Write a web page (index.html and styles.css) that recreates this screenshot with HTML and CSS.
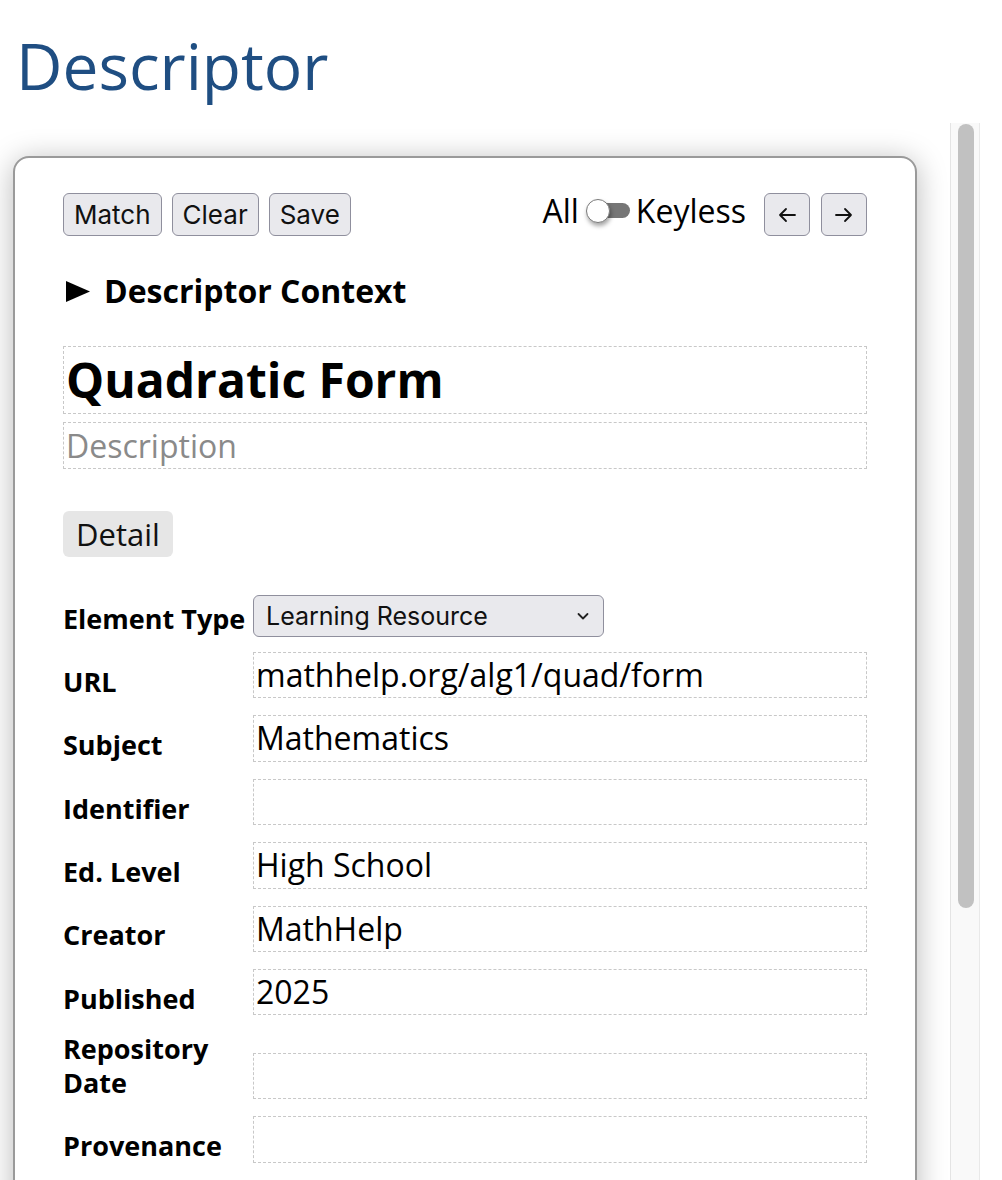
FILE: index.html
```html
<!DOCTYPE html>
<html lang="en">
<head>
<meta charset="utf-8">
<title>Descriptor</title>
<link rel="stylesheet" href="styles.css">
</head>
<body>
<h1 class="page-title">Descriptor</h1>
<div class="workspace">
  <div class="scroller">
    <section class="panel">
      <div class="toolbar">
        <div class="btn-group">
          <button class="btn">Match</button>
          <button class="btn">Clear</button>
          <button class="btn">Save</button>
        </div>
        <div class="toolbar-right">
          <div class="mode-toggle">
            <span class="mode-label">All</span>
            <span class="switch"><span class="track"></span><span class="knob"></span></span>
            <span class="mode-label keyless">Keyless</span>
          </div>
          <div class="nav">
            <button class="btn btn-icon" aria-label="Previous">
              <svg width="20" height="16" viewBox="0 0 20 16"><path d="M18 8H3M9 2L3 8l6 6" fill="none" stroke="#111" stroke-width="1.8" stroke-linecap="round" stroke-linejoin="round"/></svg>
            </button>
            <button class="btn btn-icon" aria-label="Next">
              <svg width="20" height="16" viewBox="0 0 20 16"><path d="M2 8h15M11 2l6 6-6 6" fill="none" stroke="#111" stroke-width="1.8" stroke-linecap="round" stroke-linejoin="round"/></svg>
            </button>
          </div>
        </div>
      </div>

      <details class="context">
        <summary>
          <svg class="marker" width="24" height="21" viewBox="0 0 24 21"><polygon points="0,0 24,10.5 0,21" fill="#000"/></svg>
          <span>Descriptor Context</span>
        </summary>
      </details>

      <div class="field title-field">Quadratic Form</div>
      <div class="field desc-field placeholder">Description</div>

      <button class="detail-btn">Detail</button>

      <div class="form">
        <div class="label">Element Type</div>
        <div class="select">
          <span>Learning Resource</span>
          <svg class="chev" width="14" height="10" viewBox="0 0 14 10"><path d="M2.5 3l4.5 4.5L11.5 3" fill="none" stroke="#222" stroke-width="1.8" stroke-linecap="round" stroke-linejoin="round"/></svg>
        </div>

        <div class="label">URL</div>
        <div class="field input">mathhelp.org/alg1/quad/form</div>

        <div class="label">Subject</div>
        <div class="field input">Mathematics</div>

        <div class="label">Identifier</div>
        <div class="field input"></div>

        <div class="label">Ed. Level</div>
        <div class="field input">High School</div>

        <div class="label">Creator</div>
        <div class="field input">MathHelp</div>

        <div class="label">Published</div>
        <div class="field input">2025</div>

        <div class="label">Repository Date</div>
        <div class="field input"></div>

        <div class="label">Provenance</div>
        <div class="field input"></div>
      </div>
    </section>
  </div>
  <div class="scrollbar"><div class="thumb"></div></div>
</div>
</body>
</html>
```

FILE: styles.css
```css
html, body {
  margin: 0;
  padding: 0;
  background: #fff;
  overflow: hidden;
}

body {
  font-family: "Open Sans", "Noto Sans", sans-serif;
  color: #000;
}

.page-title {
  margin: 0;
  padding: 21px 0 0 16px;
  height: 123px;
  box-sizing: border-box;
  font-size: 64px;
  font-weight: 400;
  line-height: 90px;
  color: #1f4e82;
}

.workspace {
  display: flex;
  height: 1057px;
  width: 980px;
}

.scroller {
  width: 950px;
  flex: none;
  overflow: hidden;
}

.scrollbar {
  width: 30px;
  flex: none;
  box-sizing: border-box;
  background: #f9f9f9;
  border-left: 1px solid #e4e4e4;
  border-right: 1px solid #e9e9e9;
  padding: 1px 5px 0 7px;
}

.thumb {
  height: 784px;
  border-radius: 8px;
  background: #c1c1c1;
}

.panel {
  margin: 33px 33px 0 13px;
  border: 2px solid #9a9a9a;
  border-radius: 16px;
  box-shadow: 0 4px 30px rgba(0, 0, 0, 0.28);
  padding: 35px 48px 300px 48px;
  background: #fff;
}

.toolbar {
  display: flex;
  justify-content: space-between;
  align-items: center;
  height: 43px;
}

.btn-group {
  display: flex;
  gap: 10px;
}

.btn {
  font-family: Inter, "Liberation Sans", sans-serif;
  font-size: 26px;
  height: 43px;
  padding: 0 10px;
  background: #e9e9ed;
  border: 1.5px solid #8f8f9d;
  border-radius: 6px;
  color: #111;
  display: flex;
  align-items: center;
  justify-content: center;
}

.toolbar-right {
  display: flex;
  align-items: center;
}

.mode-toggle {
  display: flex;
  align-items: center;
  margin-bottom: 8px;
}

.mode-label {
  font-size: 32px;
  line-height: 40px;
}

.switch {
  position: relative;
  width: 44px;
  height: 24px;
  margin: 0 6px 0 7px;
}

.track {
  position: absolute;
  left: 4px;
  right: 0;
  top: 4.5px;
  height: 15px;
  border-radius: 7.5px;
  background: #767676;
}

.knob {
  position: absolute;
  left: 0;
  top: 0;
  width: 24px;
  height: 24px;
  box-sizing: border-box;
  border-radius: 50%;
  background: #fff;
  border: 1.5px solid #7a7a7a;
  box-shadow: 1px 3px 4px rgba(0, 0, 0, 0.35);
}

.nav {
  display: flex;
  gap: 11px;
  margin-left: 18px;
}

.btn-icon {
  width: 46px;
  padding: 0;
}

.context {
  margin-top: 35px;
}

.context summary {
  list-style: none;
  display: flex;
  align-items: center;
  font-size: 32px;
  font-weight: 700;
  line-height: 40px;
  cursor: pointer;
}

.context summary::-webkit-details-marker {
  display: none;
}

.marker {
  margin: 0 14px 0 3px;
  flex: none;
}

.field {
  border: 1px dashed #c8c8c8;
  padding: 0 2px;
}

.title-field {
  margin-top: 35px;
  font-size: 48px;
  font-weight: 700;
  line-height: 66px;
}

.desc-field {
  margin-top: 8px;
  font-size: 32px;
  line-height: 45px;
}

.placeholder {
  color: #8a8a8a;
}

.detail-btn {
  display: block;
  margin-top: 42px;
  height: 46px;
  padding: 0 13px;
  border: none;
  border-radius: 6px;
  background: #e6e6e6;
  font-family: "Open Sans", sans-serif;
  font-size: 31px;
  color: #111;
}

.form {
  margin-top: 38px;
  display: grid;
  grid-template-columns: 190px 1fr;
  row-gap: 17px;
  align-items: end;
}

.label {
  font-size: 27px;
  font-weight: 700;
  line-height: 33.5px;
}

.select {
  width: 351px;
  height: 42px;
  box-sizing: border-box;
  display: flex;
  align-items: center;
  justify-content: space-between;
  padding: 0 13px 0 12px;
  background: #e9e9ed;
  border: 1.5px solid #8f8f9d;
  border-radius: 6px;
  font-family: Inter, "Liberation Sans", sans-serif;
  font-size: 25px;
  color: #111;
  margin-bottom: -2px;
}

.input {
  font-size: 32px;
  line-height: 44.4px;
  height: 44.4px;
}
```
